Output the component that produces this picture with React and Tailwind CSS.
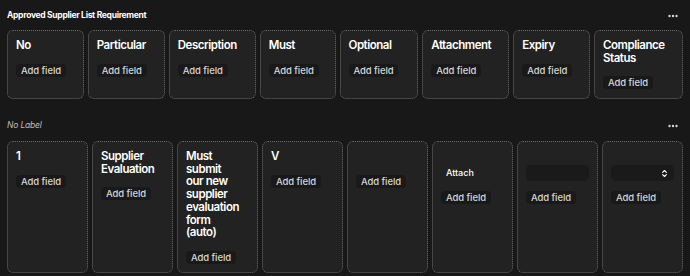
import React from 'react';
import { ChevronsUpDown } from 'lucide-react';

const requirementColumns = [
  { title: 'No', width: 'w-[77px]' },
  { title: 'Particular', width: 'w-[77px]' },
  { title: 'Description', width: 'w-[87px]' },
  { title: 'Must', width: 'w-[76px]' },
  { title: 'Optional', width: 'w-[79px]' },
  { title: 'Attachment', width: 'w-[87px]' },
  { title: 'Expiry', width: 'w-[77px]' },
  { title: 'Compliance Status', width: 'w-[89px]' },
];

const rowCells = [
  { title: '1' },
  { title: 'Supplier Evaluation' },
  { title: 'Must submit our new supplier evaluation form (auto)' },
  { title: 'V' },
  { title: '' },
  { field: 'attach' },
  { field: 'input' },
  { field: 'select' },
];

const Dots = () => (
  <svg width="10" height="4" viewBox="0 0 10 4" className="text-[#d4d4d4]">
    <circle cx="1.5" cy="2" r="1.2" fill="currentColor" />
    <circle cx="5" cy="2" r="1.2" fill="currentColor" />
    <circle cx="8.5" cy="2" r="1.2" fill="currentColor" />
  </svg>
);

const AddField = ({ className = '' }) => (
  <button className={`self-start h-[13px] px-[5px] rounded-[4px] bg-[#191919] text-[9.5px] leading-[13px] font-medium tracking-[-0.01em] text-[#d6d6d6] ${className}`}>
    Add field
  </button>
);

const Card = ({ className = '', children }) => (
  <div className={`flex flex-col border border-dotted border-[#6a6a6a] rounded-[6px] bg-[#222222] px-[8px] pt-[8px] pb-[8px] ${className}`}>
    {children}
  </div>
);

const Title = ({ children }) => (
  <div className="min-h-[12.7px] pr-[10px] text-[11.5px] leading-[12.7px] font-semibold tracking-[-0.04em] text-white">
    {children}
  </div>
);

const SectionHeader = ({ children }) => (
  <div className="flex items-center justify-between h-[13px] pr-[5px]">
    {children}
    <Dots />
  </div>
);

const App = () => {
  return (
    <div className="w-[690px] h-[276px] overflow-hidden bg-[#181818] px-[7px] pt-[9px] font-['Inter',sans-serif]">
      {/* Approved Supplier List Requirement */}
      <section>
        <SectionHeader>
          <h2 className="text-[8.5px] leading-[13px] font-bold tracking-[-0.035em] text-white">
            Approved Supplier List Requirement
          </h2>
        </SectionHeader>
        <div className="mt-[8px] flex gap-[4px] h-[69px]">
          {requirementColumns.map((col) => (
            <Card key={col.title} className={col.width}>
              <Title>{col.title}</Title>
              <AddField className="mt-[12px]" />
            </Card>
          ))}
        </div>
      </section>

      {/* No Label row */}
      <section className="mt-[20px]">
        <SectionHeader>
          <span className="text-[8.5px] leading-[13px] italic tracking-[-0.02em] text-[#bdbdbd]">No Label</span>
        </SectionHeader>
        <div className="mt-[9px] grid grid-cols-8 gap-[4px] h-[131px]">
          {rowCells.map((cell, i) => (
            <Card key={i}>
              {cell.field ? (
                <>
                  <div className="mt-[15px] h-[16px]">
                    {cell.field === 'attach' && (
                      <div className="px-[5px] text-[9px] leading-[16px] font-medium text-white">Attach</div>
                    )}
                    {cell.field === 'input' && <div className="h-full rounded-[5px] bg-[#1a1a1a]" />}
                    {cell.field === 'select' && (
                      <div className="h-full rounded-[5px] bg-[#1a1a1a] flex items-center justify-end pr-[5px]">
                        <ChevronsUpDown size={9} strokeWidth={3} className="text-white" />
                      </div>
                    )}
                  </div>
                  <AddField className="mt-[10px]" />
                </>
              ) : (
                <>
                  <Title>{cell.title}</Title>
                  <AddField className="mt-[12px]" />
                </>
              )}
            </Card>
          ))}
        </div>
      </section>
    </div>
  );
};

export default App;
